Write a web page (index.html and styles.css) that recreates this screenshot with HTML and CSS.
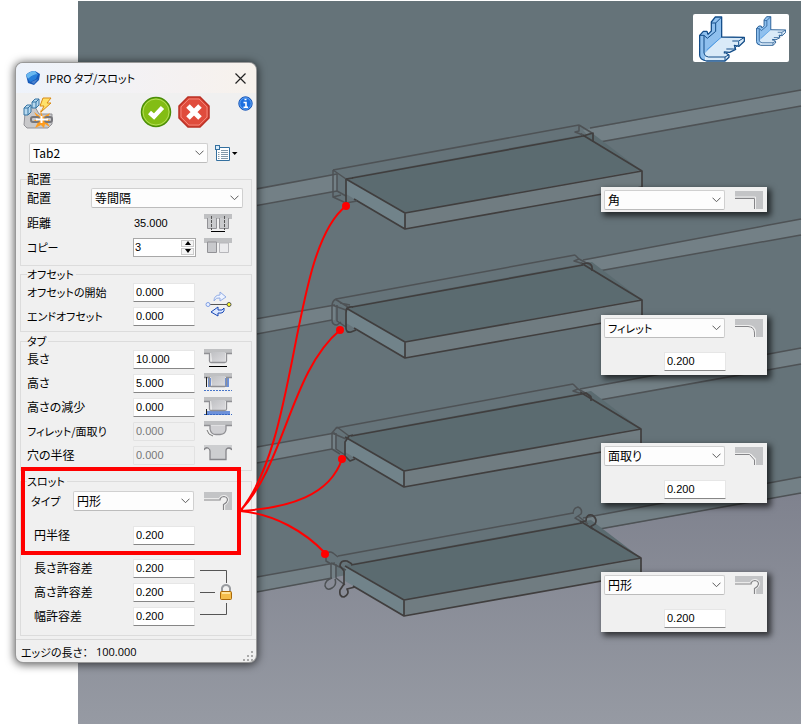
FILE: index.html
```html
<!DOCTYPE html>
<html lang="ja">
<head>
<meta charset="utf-8">
<title>IPRO タブ/スロット</title>
<link rel="stylesheet" href="styles.css">
</head>
<body>
<svg class="defs" aria-hidden="true">
  <defs>
    <linearGradient id="backdrop" x1="0" y1="0" x2="0" y2="1"><stop offset="0" stop-color="#6d707c"/><stop offset=".68" stop-color="#7f828e"/><stop offset="1" stop-color="#969aa3"/></linearGradient>
    <linearGradient id="metal" x1="0" y1="0" x2="1" y2="1"><stop offset="0" stop-color="#bfc0c3"/><stop offset="1" stop-color="#dcdcdf"/></linearGradient>
    <symbol id="tab" viewBox="0 0 802 725">
      <path d="M346 178L592 133L642 171L405 213Z" fill="#5b6b70"/>
      <path d="M346 179L405 213V229L346 194Z" fill="#71838a"/>
      <path d="M405 213L642 170V187L405 229Z" fill="#707c81"/>
      <g fill="none" stroke="#403e3e" stroke-width="1.7" stroke-linejoin="round">
        <path d="M346 179L405 213V229M405 213L642 171V187L405 229L354 199M352 178L583 136M581 134L642 171"/>
      </g>
    </symbol>
    <symbol id="chevron" viewBox="0 0 9 6"><path d="M.5 .7L4.5 4.7L8.5 .7" fill="none" stroke="#5c5c5c"/></symbol>
    <symbol id="i-corner" viewBox="0 0 28 18"><path d="M0 0H28V18H21V7H0Z" fill="#c3c4c6"/><path d="M0 7.5H19.5V18" fill="none" stroke="#858588"/><path d="M0 6H20.5V18" fill="none" stroke="#eee"/></symbol>
    <symbol id="i-fillet" viewBox="0 0 28 18"><path d="M0 0H28V18H21V13Q20 7 14 7H0Z" fill="#c3c4c6"/><path d="M0 7.5H13Q19.500 8 19.500 14V18" fill="none" stroke="#858588"/><path d="M0 6.500H14Q20.500 7 20.500 13V18" fill="none" stroke="#eee"/></symbol>
    <symbol id="i-chamfer" viewBox="0 0 28 18"><path d="M0 0H28V18H21V12L16 7H0Z" fill="#c3c4c6"/><path d="M0 7.500H14.500L19.500 13V18" fill="none" stroke="#858588"/><path d="M0 6.500H15L20.500 12V18" fill="none" stroke="#eee"/></symbol>
    <symbol id="i-round" viewBox="0 0 28 18"><path d="M0 0H28V18H21V12.500Q25 10 24 6.500Q23 3.500 20 3.500Q16.500 4 16 7H0Z" fill="#c3c4c6"/><path d="M0 8H16Q16.500 4.500 20 4.500Q23.500 5 23.500 8Q23 11 19.500 12.500V18" fill="none" stroke="#858588" stroke-width="1.200"/><path d="M0 6.500H15Q16 3.500 20 3.300Q24.700 4 24.700 8Q24 11.500 20.700 13.300V18" fill="none" stroke="#eee" stroke-width=".9"/></symbol>
    <symbol id="i-tab" viewBox="0 0 28 20"><path d="M0 0H28V4H0Z" fill="#bfc0c2"/><path d="M7 3H21V13H8Z" fill="url(#metal)"/><path d="M0 4.500H5.500V12Q5.500 13.500 7 13.500H20.500Q22.500 13.500 22.500 12V4.500H28" fill="none" stroke="#909094" stroke-width="1.300"/></symbol>
    <symbol id="angle" viewBox="0 0 138 136">
      <path d="M2 57L13 45H24L27 54L37 44V17L49 2H68V62L18 112V134Q2 130 2 117Z" fill="#8fc0ee"/>
      <path d="M68 62L136 63V74L120 89L106 87L110 99L92 107H76L90 116V122L78 134H20L16 112Z" fill="#d9eaf8"/>
      <path d="M23 101L69 61" stroke="#4a98e2" stroke-width="3"/>
      <g fill="none" stroke="#124c88" stroke-width="3.800" stroke-linejoin="round"><path d="M2 57L13 45H24L27 54L37 44V17L49 2H68V62L136 63V75L120 90L106 87L110 99L92 108L76 107L90 116V123L78 134H22Q2 130 2 117Z"/><path d="M2 57H15L25 66L50 45V20H38M50 20L67 3M15 58V110Q16 121 28 122H78L90 115M78 122V133M76 107V112M100 74H119L135 64M119 75V88M82 98H104L116 87" stroke-width="3"/></g>
    </symbol>
  </defs>
</svg>

<main class="stage">
  <svg class="scene" viewBox="0 0 802 725" preserveAspectRatio="xMinYMin slice" role="img" aria-label="タブ付きの板金モデル">
    <rect x="78" y="1" width="723" height="723" fill="url(#backdrop)"/>
    <path d="M78 1H801V493L597 530L330 578L78 625Z" fill="#657379"/>
    <g fill="#738086">
      <path d="M78 222L337 174V191L78 238ZM583 130L801 90V106L594 143Z"/>
      <path d="M78 350L335 305V320L78 367ZM583 260L801 219V235L593 272Z"/>
      <path d="M78 479L335 433V449L78 496ZM580 389L801 348V364L594 401Z"/>
      <path d="M78 609L335 563V578L78 625ZM583 518L801 477V493L594 530Z"/>
    </g>
    <g fill="none" stroke="#4e5255" stroke-width="1.500">
      <path d="M78 222L337 174M78 238L337 191M590 128L801 90M594 143L801 106M333 170L579 125"/>
      <path d="M78 350L335 305M78 367L332 320M583 260L801 219M593 272L801 235M336 299L575 255"/>
      <path d="M78 479L335 433M78 496L332 449M580 389L801 348M594 401L801 364M336 428L573 384"/>
      <path d="M78 609L335 563M78 625L332 578M583 518L801 477M594 530L801 493M338 556L573 513"/>
    </g>
    <use href="#tab" width="802" height="725"/>
    <use href="#tab" y="129" width="802" height="725"/>
    <use href="#tab" x="-1" y="258" width="802" height="725"/>
    <use href="#tab" x="-1" y="387" width="802" height="725"/>
    <g fill="none" stroke="#4e5255" stroke-width="1.500" stroke-linejoin="round">
      <path d="M333 170V197L346 203L357 201M333 170L346 179M337 174V192M333 197L341 195M337 191L346 196M579 125V131L575 132L583 135M579 125L592 133"/>
      <path d="M336 299Q332 301 332 306V320Q332 325 337 325L341 322M337 305V321L346 327M335 299L348 307M332 305L346 310M340 303L350 305M575 255L579 259L574 261L584 264M579 259L592 266"/>
      <path d="M337 427L332 433V449L340 454M336 433V449L345 455M337 427L349 436M332 433L346 439M573 384L578 389L573 391L582 394M578 389L591 396"/>
      <path d="M338 557L333 553Q328 550 326 556V561L331 564V579M336 564V578L345 585M332 578Q325 580 325 586Q327 591 332 588Q337 585 335 579M331 563L346 570M573 514Q573 508 578 507Q583 509 581 514L575 518L582 522M578 516L588 524"/>
    </g>
    <g fill="none" stroke="#403e3e" stroke-width="1.700" stroke-linejoin="round">
      <path d="M346 179V203M346 179L353 178M583 136L593 133V142"/>
      <path d="M353 307Q346 306 346 313V328Q346 333 351 332L356 330M582 264L588 263Q593 264 592 271"/>
      <path d="M353 435L349 436L345 442V456L350 461L355 459M580 394L586 393L591 397V401"/>
      <path d="M352 564L347 561Q340 560 340 566L344 571V584L340 590Q339 597 344 597Q350 594 347 589L355 587M580 522L586 521Q586 514 592 515Q598 519 595 524L590 527L593 529"/>
    </g>
  </svg>

  <div class="logos">
    <svg width="46" height="46"><use href="#angle"/></svg>
    <svg width="30" height="30"><use href="#angle"/></svg>
  </div>

  <section class="dialog" aria-label="IPRO タブ/スロット">
    <header class="titlebar">
      <svg width="16" height="16" viewBox="0 0 16 16"><path d="M1 5Q4 1 10 1L15 4L14 10L9 15L3 13Z" fill="#1759b8"/><path d="M1 5Q5 1 10 1L13 5L7 6L3 9Z" fill="#69b8f0"/><path d="M3 9Q8 4 13 4L11 9L5 12Z" fill="#287fda"/><path d="M6 12L13 9L9 14Z" fill="#4c83cf"/></svg>
      <h1>IPRO タブ/スロット</h1>
      <button class="close" type="button" aria-label="閉じる"><svg width="11" height="11" viewBox="0 0 11 11"><path d="M.5 .5L10.500 10.500M10.500 .5L.5 10.500" stroke="#222" stroke-width="1.200"/></svg></button>
    </header>

    <div class="toolbar">
      <svg class="tool" width="30" height="32" viewBox="0 0 30 32">
        <path d="M2 16L11 8L16 17H29V27L25 31H4L1 28Z" fill="#c8c8ca" stroke="#929297"/>
        <path d="M1 11L4 8H8V15L5 18H1ZM9 5L12 2H16V8L13 11H9Z" fill="#b7d9ef" stroke="#3674a3"/><path d="M1 11H5V18M5 11L8 8M9 5H13V11M13 5L16 2" fill="none" stroke="#3674a3"/>
        <path d="M17 12L18 20L11 15L15 22L8 25H15L12 31L18 28L21 31L22 27L27 30L24 25H29L24 22L27 16L20 20Z" fill="#ff9c1d"/>
        <g fill="none" stroke="#77777c" stroke-width="2"><rect x="8" y="20" width="8" height="5" rx="2"/><rect x="22" y="20" width="7" height="5" rx="2"/></g><path d="M13 22.500H25M18.500 19V26" stroke="#fff" stroke-width="2"/>
        <path d="M20 1H28L24 6H28L18 15L21 9H17Z" fill="#ffe16b" stroke="#d98a12"/>
      </svg>
      <button type="button" class="ok" aria-label="OK"><svg width="32" height="32" viewBox="0 0 32 32"><circle cx="16" cy="16" r="14.500" fill="#83bd14" stroke="#4b8e08" stroke-width="1.500"/><circle cx="16" cy="16" r="13" fill="none" stroke="#b3de55"/><path d="M9.500 16.500L14 20.500L22.500 11.500" fill="none" stroke="#fff" stroke-width="4.500"/></svg></button>
      <button type="button" aria-label="キャンセル"><svg width="32" height="32" viewBox="0 0 32 32"><path d="M10 1H22L31 10V22L22 31H10L1 22V10Z" fill="#e04c3c" stroke="#b93024" stroke-width="1.500"/><path d="M11 3H21L29 11V21L21 29H11L3 21V11Z" fill="none" stroke="#f18377"/><path d="M10 10L22 22M22 10L10 22" stroke="#fff" stroke-width="5"/></svg></button>
      <button type="button" class="info" aria-label="情報"><svg width="15" height="15" viewBox="0 0 15 15"><circle cx="7.500" cy="7.500" r="6.700" fill="#1c6fe0" stroke="#1553b4"/><circle cx="7.500" cy="7.500" r="5.700" fill="none" stroke="#79b3f5" stroke-width=".8"/><path d="M6.500 3.500H8.500M5.500 6.500H8V11M5.500 11.300H10" fill="none" stroke="#fff" stroke-width="1.600"/></svg></button>
    </div>

    <div class="preset">
      <span class="select"><select aria-label="プリセット"><option>Tab2</option></select><svg width="9" height="6"><use href="#chevron"/></svg></span>
      <button type="button" aria-label="リスト"><svg width="23" height="16" viewBox="0 0 23 16"><path d="M3.500 2.500H14.500V15.500H1.500V4" fill="#fff" stroke="#34709f"/><rect x=".5" y=".5" width="4" height="4" fill="#d9ecfb" stroke="#34709f"/><path d="M6 5.500H13M6 7.500H13M6 9.500H13M6 11.500H13M6 13.500H13M3 7.500H4.500M3 9.500H4.500M3 11.500H4.500M3 13.500H4.500" stroke="#8499a8"/><path d="M17 7H22.500L19.700 10Z" fill="#000"/></svg></button>
    </div>

    <fieldset class="g-layout">
      <legend>配置</legend>
      <div class="wide-row"><label for="arr">配置</label><span class="select"><select id="arr"><option>等間隔</option></select><svg width="9" height="6"><use href="#chevron"/></svg></span></div>
      <div class="rows">
        <span class="label">距離</span><output class="num">35.000</output>
        <svg class="icon" width="28" height="18" viewBox="0 0 28 18"><path d="M0 0H28V5H0Z" fill="#bfc0c2"/><path d="M3.500 4V14.500H12.500V4M15.500 4V14.500H24.500V4" fill="#cacbcd" stroke="#929296"/><path d="M7.500 2V16M20.500 2V16" stroke="#555" stroke-dasharray="3 1"/><path d="M7 17.500H21" stroke="#000"/></svg>
        <label for="copy" class="kana">コピー</label>
        <span class="spin"><input id="copy" value="3"><span class="steps"><button type="button" aria-label="増やす"><svg width="6" height="4" viewBox="0 0 6 4"><path d="M0 4L3 0L6 4Z"/></svg></button><button type="button" aria-label="減らす"><svg width="6" height="4" viewBox="0 0 6 4"><path d="M0 0L3 4L6 0Z"/></svg></button></span></span>
        <svg class="icon" width="28" height="18" viewBox="0 0 28 18"><path d="M0 0H28V5H0Z" fill="#bfc0c2"/><path d="M3.500 4V14.500H12.500V4Z" fill="#c8c9cc" stroke="#929296"/><path d="M15.500 5V14.500H24.500V5Z" fill="#ebebed" stroke="#b7b7bb"/></svg>
      </div>
    </fieldset>

    <fieldset class="g-offset">
      <legend class="kana">オフセット</legend>
      <div class="rows">
        <label for="o1" class="kana">オフセットの開始</label><input id="o1" value="0.000">
        <svg class="icon span2" width="28" height="28" viewBox="0 0 28 28"><path d="M4 14.500H24" stroke="#555"/><circle cx="4" cy="14.500" r="2" fill="#eaf1ff" stroke="#7f9fe5"/><circle cx="25" cy="14.500" r="2" fill="#ffff26" stroke="#555"/><path d="M10 11Q10 5 16 5V2L22 7L16 11V8Q12 7 10 11Z" fill="#edf3ff" stroke="#91ace5"/><path d="M20 18Q19 21 14 20V17L7 22L14 26V23Q21 24 20 18Z" fill="#dce8ff" stroke="#1747b5"/></svg>
        <label for="o2" class="kana">エンドオフセット</label><input id="o2" value="0.000">
      </div>
    </fieldset>

    <fieldset class="g-tab">
      <legend class="kana">タブ</legend>
      <div class="rows">
        <label for="t1">長さ</label><input id="t1" value="10.000">
        <svg class="icon" width="28" height="20" viewBox="0 0 28 20"><use href="#i-tab"/><path d="M5 17.500H23" stroke="#000"/></svg>
        <label for="t2">高さ</label><input id="t2" value="5.000">
        <svg class="icon" width="28" height="20" viewBox="0 0 28 20"><path d="M4 5H7V14H4ZM21 5H25V14H21Z" fill="#6c91db"/><use href="#i-tab"/><path d="M2.500 4V14" stroke="#222"/><path d="M0 17.500H28" stroke="#4775c9" stroke-dasharray="2 1"/></svg>
        <label for="t3">高さの減少</label><input id="t3" value="0.000">
        <svg class="icon" width="28" height="20" viewBox="0 0 28 20"><path d="M3 14H26V18H3Z" fill="#6c91db"/><use href="#i-tab"/><path d="M2.500 12V18" stroke="#222"/><path d="M0 17.500H28" stroke="#3868c2" stroke-dasharray="2 1"/></svg>
        <label for="t4" class="kana">フィレット/面取り</label><input id="t4" value="0.000" disabled>
        <svg class="icon" width="28" height="20" viewBox="0 0 28 20"><path d="M0 0H28V4H0Z" fill="#bfc0c2"/><path d="M0 4.500H6V8Q7 13.500 12 13.500H16Q22 13 22 8V4.500H28" fill="#d0d0d3" stroke="#909094" stroke-width="1.300"/><path d="M3 9Q4 14 9 15" fill="none" stroke="#777"/></svg>
        <label for="t5">穴の半径</label><input id="t5" value="0.000" disabled>
        <svg class="icon" width="28" height="20" viewBox="0 0 28 20"><path d="M0 0H28V5L22 3V14H6V3L0 5Z" fill="#cdced0"/><path d="M0 5Q1 2 4 3Q6 4 6 6V14.500H22V6Q22 3 25 3Q27 3 28 5" fill="none" stroke="#858589" stroke-width="1.300"/></svg>
      </div>
    </fieldset>

    <fieldset class="g-slot">
      <legend class="kana">スロット</legend>
      <div class="type-row"><label for="type" class="kana">タイプ</label><span class="select"><select id="type"><option>円形</option></select><svg width="9" height="6"><use href="#chevron"/></svg></span><svg width="28" height="18"><use href="#i-round"/></svg></div>
      <div class="rows indent"><label for="s1">円半径</label><input id="s1" value="0.200"></div>
      <div class="rows indent tol">
        <label for="s2">長さ許容差</label><input id="s2" value="0.200">
        <svg class="span3" width="32" height="48" viewBox="0 0 32 48"><path d="M0 2.500H26.500V15M0 24.500H15M0 46.500H26.500V35" fill="none" stroke="#555"/><path d="M22 24V20Q23 17 26 17Q29 17 30 20V24" fill="none" stroke="#999ca0" stroke-width="2"/><rect x="20.500" y="23.500" width="11" height="8" rx="1" fill="#f4bd4b" stroke="#a9690b"/><path d="M22 25H30" stroke="#ffe398" stroke-width="2"/></svg>
        <label for="s3">高さ許容差</label><input id="s3" value="0.200">
        <label for="s4">幅許容差</label><input id="s4" value="0.200">
      </div>
    </fieldset>

    <footer class="status"><span class="kana">エッジの長さ：</span><span class="latin">100.000</span>
      <svg class="grip" width="12" height="12" viewBox="0 0 12 12"><path d="M9 1h2v2H9zM5 5h2v2H5zM9 5h2v2H9zM1 9h2v2H1zM5 9h2v2H5zM9 9h2v2H9z" fill="#aaa"/></svg>
    </footer>
  </section>

  <section class="popup p1"><span class="select"><select aria-label="タイプ"><option>角</option></select><svg width="9" height="6"><use href="#chevron"/></svg></span><svg width="28" height="18"><use href="#i-corner"/></svg></section>
  <section class="popup p2"><span class="select"><select aria-label="タイプ" class="kana"><option>フィレット</option></select><svg width="9" height="6"><use href="#chevron"/></svg></span><svg width="28" height="18"><use href="#i-fillet"/></svg><input aria-label="半径" value="0.200"></section>
  <section class="popup p3"><span class="select"><select aria-label="タイプ"><option>面取り</option></select><svg width="9" height="6"><use href="#chevron"/></svg></span><svg width="28" height="18"><use href="#i-chamfer"/></svg><input aria-label="面取り" value="0.200"></section>
  <section class="popup p4"><span class="select"><select aria-label="タイプ"><option>円形</option></select><svg width="9" height="6"><use href="#chevron"/></svg></span><svg width="28" height="18"><use href="#i-round"/></svg><input aria-label="円半径" value="0.200"></section>

  <svg class="callouts" viewBox="0 0 802 725" preserveAspectRatio="xMinYMin slice" aria-hidden="true">
    <g fill="none" stroke="#f00"><rect x="23" y="469" width="216" height="84" stroke-width="4"/>
    <path stroke-width="2" d="M240 511C300 440 290 250 346 206M240 511C285 465 290 372 340 330M240 511C290 508 330 495 342 459M240 511C275 514 305 532 325 553"/></g>
    <g fill="#f00"><circle cx="346" cy="206" r="4"/><circle cx="340" cy="330" r="4"/><circle cx="342" cy="459" r="4"/><circle cx="325" cy="554" r="4"/></g>
  </svg>
</main>
</body>
</html>
```
FILE: styles.css
```css
* { box-sizing: border-box; }
body {
  margin: 0;
  background: #fff;
  color: #000;
  font: 12px/16px "Noto Sans CJK JP", sans-serif;
  font-feature-settings: "palt";
}
.defs { position: absolute; width: 0; height: 0; }
.stage { position: relative; min-height: 100vh; overflow: hidden; }
.scene, .callouts { position: absolute; top: 0; left: 0; width: 100%; height: 100%; }
.callouts { pointer-events: none; }
svg { display: block; flex: none; }

button { padding: 0; border: 0; background: none; display: block; }
input, select {
  margin: 0;
  color: #000;
  font: inherit;
  font-feature-settings: inherit;
}
input, .num { font-family: "Liberation Sans", sans-serif; font-size: 11px; }
input {
  width: 62px;
  height: 19px;
  padding: 0 2px;
  border: 1px solid #e6e6e6;
  border-bottom-color: #868686;
  border-radius: 1px;
  background: #fff;
}
input:disabled { background: #f0f0f0; border-color: #e2e2e2; color: #777; }
.select { display: grid; align-items: center; }
.select > * { grid-area: 1 / 1; }
.select svg { justify-self: end; margin-right: 4px; pointer-events: none; }
select {
  appearance: none;
  width: 100%;
  height: 20px;
  padding: 0 3px;
  border: 1px solid #d0d0d0;
  border-bottom-color: #bcbcbc;
  border-radius: 2px;
  background: #fdfdfd;
  line-height: 16px;
}
.kana { font-size: 11px; }
.latin { font-family: "Open Sans", sans-serif; font-size: 11px; }

.logos {
  position: absolute;
  top: 14px;
  right: 13px;
  display: flex;
  justify-content: space-between;
  align-items: flex-start;
  width: 96px;
  height: 48px;
  padding: 2px 3px 0 6px;
  border-radius: 2px;
  background: #fff;
}

.dialog {
  position: absolute;
  top: 63px;
  left: 16px;
  width: 240px;
  border-radius: 7px;
  background: #f0f0f0;
  box-shadow: 0 0 0 1px #999, 0 1px 9px 2px rgba(0, 0, 0, .6);
  overflow: hidden;
}
.titlebar {
  display: flex;
  align-items: center;
  gap: 5px;
  height: 30px;
  padding: 0 10px 0 9px;
  background: linear-gradient(90deg, #eef3fb, #f5f1f1 70%, #f7f2ec);
}
.titlebar h1 { margin: 0; flex: 1; font-size: 11px; font-weight: 400; }
.toolbar { display: flex; align-items: flex-start; height: 50px; padding: 3px 3px 0 7px; }
.toolbar .tool { margin-top: 1px; }
.toolbar .ok { margin-left: 87px; margin-right: 6px; }
.toolbar .info { margin-left: auto; }
.preset { display: flex; align-items: center; gap: 7px; height: 20px; padding: 0 18px 0 13px; }
.preset .select { flex: 1; }

fieldset { min-width: 0; margin: 0 4px; padding: 0 8px 3px 6px; border: 1px solid #dcdcdc; }
legend { padding: 0 2px 0 0; height: 12px; line-height: 12px; }
.g-layout { margin-top: 10px; padding-bottom: 6px; }
.g-offset { margin-top: 2px; }
.g-tab { margin-top: 3px; }
.g-slot { margin-top: 4px; padding-bottom: 7px; }
.rows {
  display: grid;
  grid-template-columns: 98px 63px 28px;
  column-gap: 8px;
  grid-auto-rows: 24px;
  align-items: center;
}
.rows > label, .rows > .label { grid-column: 1; white-space: nowrap; }
.rows > input, .rows > output, .rows > .spin { grid-column: 2; }
.rows > .icon { grid-column: 3; }
.rows > .span2 { grid-row: 1 / span 2; }
.rows > .span3 { grid-column: 3; grid-row: 1 / span 3; justify-self: end; }
.num { padding-left: 1px; }
.wide-row, .type-row { display: flex; align-items: center; justify-content: space-between; height: 26px; }
.wide-row .select { width: 152px; }
.type-row { height: 28px; padding: 0 11px 0 4px; }
.type-row label { white-space: nowrap; width: 32px; }
.type-row .select { width: 121px; }
.indent { margin-top: 8px; }
.tol { margin-top: 9px; }
.indent label { padding-left: 7px; }
.spin { display: flex; width: 63px; height: 19px; border: 1px solid #a8a8a8; background: #fff; }
.spin input { flex: 1; min-width: 0; height: 17px; padding: 0 1px; border: 0; }
.steps { display: flex; flex-direction: column; width: 15px; gap: 1px; padding: 1px; }
.steps button { flex: 1; display: grid; place-items: center; border: 1px solid #ccc; background: #f5f5f5; }
.status {
  display: flex;
  align-items: center;
  gap: 8px;
  height: 23px;
  margin-top: 3px;
  padding: 1px 2px 0 5px;
  border-top: 1px solid #d9d9d9;
}
.grip { margin-left: auto; align-self: flex-end; }

.popup {
  position: absolute;
  left: 601px;
  display: grid;
  grid-template-columns: 121px 28px;
  grid-auto-rows: 21px;
  column-gap: 10px;
  row-gap: 13px;
  align-items: center;
  width: 166px;
  padding: 2px 3px;
  background: #f0f0f0;
  box-shadow: 3px 3px 6px 1px rgba(0, 0, 0, .65);
}
.popup input { justify-self: end; margin-right: -1px; margin-bottom: 1px; }
.p1 { top: 187px; }
.p2, .p3, .p4 { padding-bottom: 3px; }
.p2 { top: 315px; }
.p3 { top: 443px; }
.p4 { top: 572px; }
```
